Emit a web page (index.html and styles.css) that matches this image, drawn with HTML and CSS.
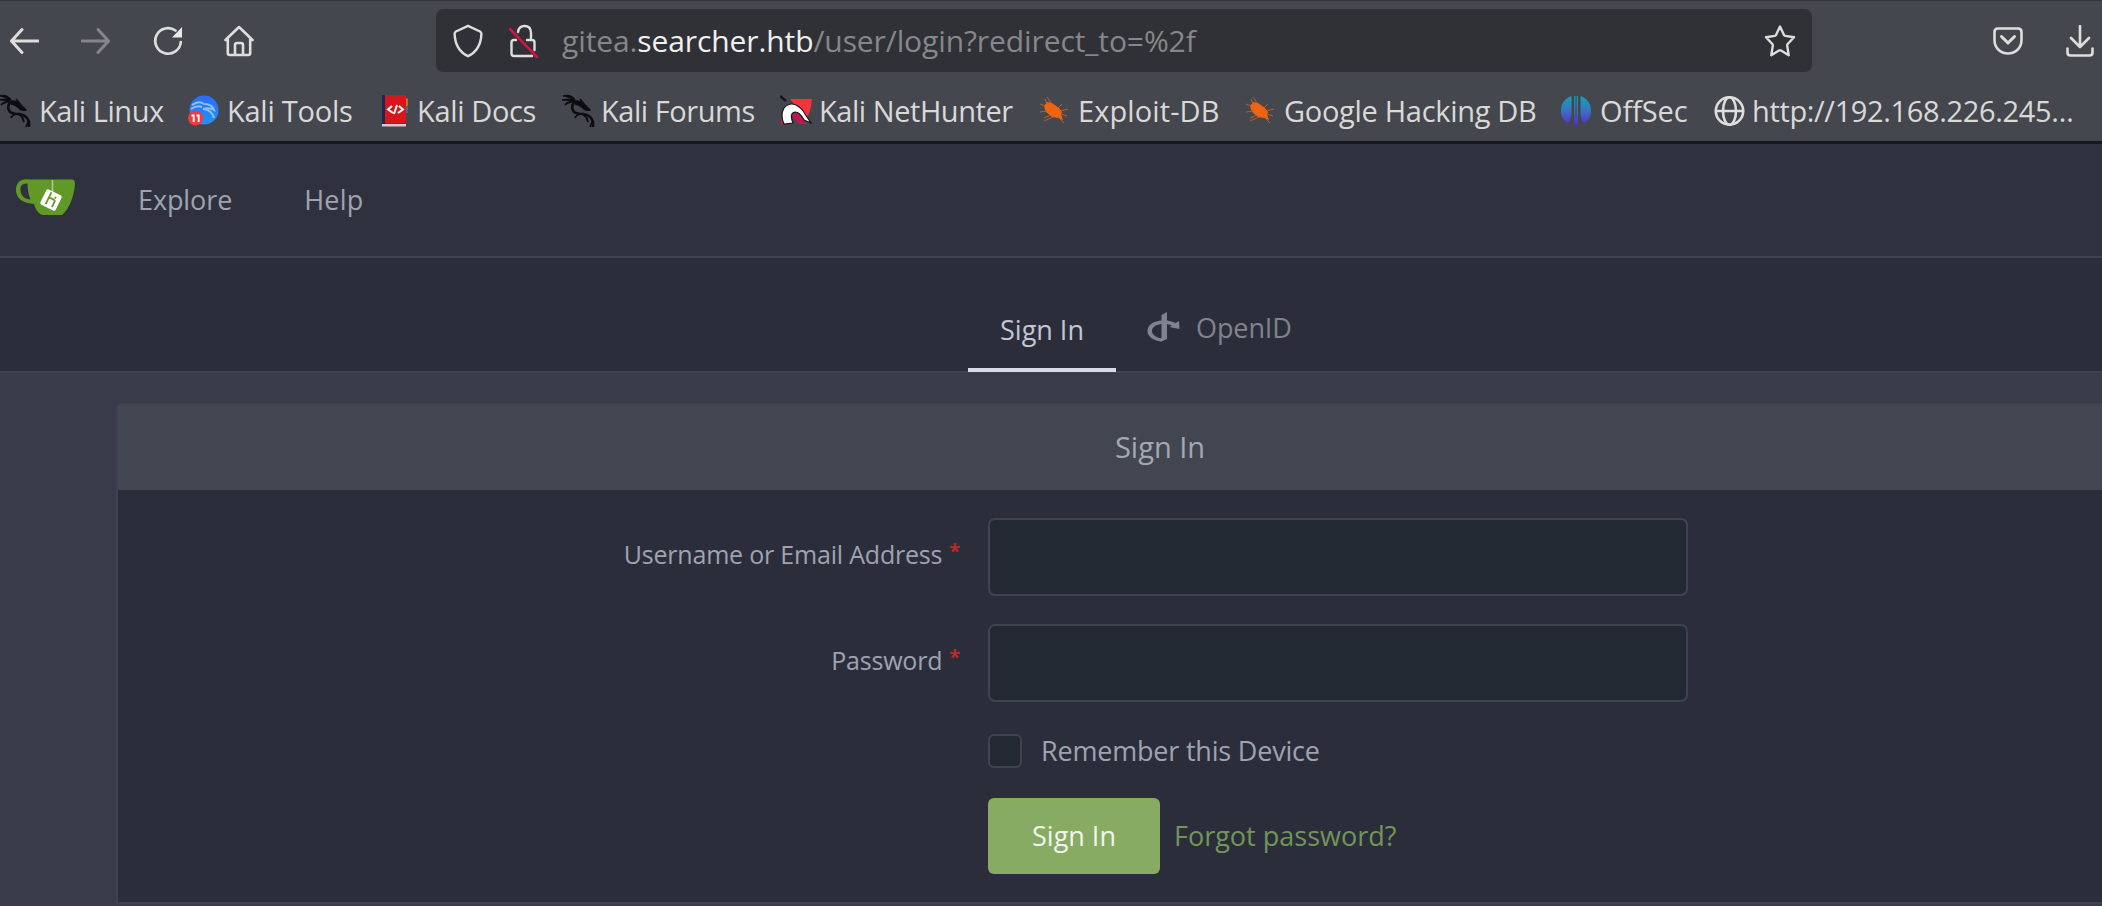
FILE: index.html
```
<!DOCTYPE html>
<html lang="en">
<head>
<meta charset="utf-8">
<title>Sign In - Gitea</title>
<link rel="stylesheet" href="styles.css">
</head>
<body>
<svg width="0" height="0" class="defs">
  <defs>
    <linearGradient id="offsec" x1="0" y1="0" x2="0" y2="1"><stop offset="0" stop-color="#12a5b5"/><stop offset=".5" stop-color="#3b6fc4"/><stop offset="1" stop-color="#5a1fd0"/></linearGradient>
    <linearGradient id="tools" x1="0" y1="0" x2="0" y2="1"><stop offset="0" stop-color="#2b6cf5"/><stop offset="1" stop-color="#1f93f8"/></linearGradient>
    <symbol id="dragon" viewBox="0 0 33 34">
      <path d="M1 2q8-2 12 4M0 6l10-1 3 3M3 11q3-4 8-3M18 5l5 6M13 7q7 0 10 4l5 5q-5 1-8-3-4-3-7-3" fill="#0c0d10" stroke="#0c0d10" stroke-width="1.600" stroke-linejoin="round"/>
      <path d="M13 7q-5 6-1 11 3 2 9 2 8 1 10 8v5" fill="none" stroke="#0c0d10" stroke-width="2.600"/>
      <path d="M21 20q4 3 5 8M18 20q-4 1-5 4M31 26l-3 7" fill="none" stroke="#0c0d10" stroke-width="1.800"/>
    </symbol>
    <symbol id="bug" viewBox="0 0 32 32">
      <path d="M6 11l3-4 5 1 7 5 3 4-1 2 2 6-5-2-6-1-6-5z" fill="#f0640f"/>
      <path d="M9 9L7 4M13 8L9 2M20 13l4-4M22 16l8-2M23 19l6 2M20 22l6 6M13 20l-7 3M15 22l-9 4M9 16l-7 1M7 11L2 9" fill="none" stroke="#b3602f" stroke-width="1"/>
    </symbol>
  </defs>
</svg>

<header class="browser">
  <div class="toolbar">
    <div class="buttons">
      <svg width="30" height="28" viewBox="0 0 30 28" class="ico"><path d="M29 14H3M13 2.500L2.500 14 13 25.500" stroke-width="3"/></svg>
      <svg width="30" height="28" viewBox="0 0 30 28" class="ico dim"><path d="M1 14h26M17 2.500L27.500 14 17 25.500" stroke-width="3"/></svg>
      <svg width="30" height="30" viewBox="0 0 30 30" class="ico"><path d="M22.500 4.500A12.800 12.800 0 1 0 27.800 16" stroke-width="2.700"/><path d="M29 1v10.500H19z" fill="#e9e9e7" stroke="none"/></svg>
      <svg width="30" height="32" viewBox="0 0 30 32" class="ico"><path d="M1.500 15L15 2l13.500 13M3.800 13v15q0 2 2 2h18.400q2 0 2-2V13M11 30V20q0-2 2-2h4q2 0 2 2v10" stroke-width="2.600"/></svg>
    </div>
    <div class="urlbar">
      <svg width="30" height="34" viewBox="0 0 30 34" class="ico shield"><path d="M15 1.800L27 7.500q1.500.7 1.400 2.400C28 20 24 28 15 32.200 6 28 2 20 1.600 9.900Q1.500 8.200 3 7.500z" stroke-width="2.400"/></svg>
      <svg width="30" height="34" viewBox="0 0 30 34" class="ico"><path d="M9 8q1-6 6.500-6Q22 2 22 9v7M7 16H5q-2.500 0-2.500 2.500v11Q2.500 32 5 32h18M18 16h5q2.500 0 2.500 2.500V26" stroke-width="2.400"/><path d="M1 5l27 28" stroke="#d3123e" stroke-width="2.600"/></svg>
      <div class="url">gitea.<b>searcher.htb</b>/user/login?redirect_to=%2f</div>
      <svg width="32" height="34" viewBox="0 0 32 34" class="ico star"><path d="M16 2.500l4 8.500q.4.800 1.300.9l8.700 1.300-6.300 6.800q-.6.700-.5 1.500l1.500 9.700-7.700-4.700q-1-.6-2 0L7.300 31.200l1.500-9.700q.1-.8-.5-1.500L2 13.200l8.700-1.300q.9-.1 1.300-.9z" stroke-width="2.400"/></svg>
    </div>
    <svg width="30" height="28" viewBox="0 0 30 28" class="ico pocket"><path d="M5 1.500h20q3.500 0 3.500 3.500v8c0 8-6 13.500-13.500 13.500S1.500 21 1.500 13V5Q1.500 1.500 5 1.500z" stroke-width="2.600"/><path d="M8.500 9.500l6.500 6.500 6.500-6.500" stroke-width="3"/></svg>
    <svg width="28" height="32" viewBox="0 0 28 32" class="ico download"><path d="M14 1v21M5 13l9 9 9-9M1.500 23.500v4q0 3 3 3h19q3 0 3-3v-4" stroke-width="2.600"/></svg>
  </div>
  <nav class="bookmarks">
    <a class="bm b1"><svg width="33" height="34"><use href="#dragon"/></svg><span>Kali Linux</span></a>
    <a class="bm b2"><svg width="32" height="32" viewBox="0 0 32 32"><circle cx="16" cy="15" r="14.500" fill="url(#tools)"/><path d="M4 10q7-5 12-1 8 0 10 6-5-3-11-1 9 1 11 9M3 14q6-4 11-2" fill="none" stroke="#8fc0fb" stroke-width="2"/><circle cx="7.500" cy="23" r="7.500" fill="#ee3b3f"/><path d="M3.500 20.500h2.200V27M8.500 20.500h2.200V27" fill="none" stroke="#fff" stroke-width="1.800"/></svg><span>Kali Tools</span></a>
    <a class="bm b3"><svg width="26" height="32" viewBox="0 0 26 32"><path d="M24 3v8h1.800V4z" fill="#d8791f"/><path d="M24 11h1.800v7H24z" fill="#2c7a8c"/><path d="M0 0h3.500v31H0z" fill="#1c2758"/><path d="M3 0h21v28H3z" fill="#d6161b"/><path d="M0 29h24v2.500H0z" fill="#d9c9cd"/><path d="M10 11l-4 3.500 5 3.500M17 11l4 3.500-5 3.500M15 10l-3 9" fill="none" stroke="#fff" stroke-width="2"/></svg><span>Kali Docs</span></a>
    <a class="bm b4"><svg width="33" height="34"><use href="#dragon"/></svg><span>Kali Forums</span></a>
    <a class="bm b5"><svg width="33" height="32" viewBox="0 0 33 32"><path d="M10 4h22q-1 13-6 20L15 10z" fill="#f8323a"/><path d="M0 1l6 5" stroke="#17181b" stroke-width="2.500"/><path d="M1 21l5 8-5 1zM11 20q5-6 10 2l6 7h-8z" fill="#c5164a"/><path d="M4 29Q0 20 4 13q5-6 12-3 6 3 9 9l6 9-7-3q-4-8-9-8-6 1-2 11z" fill="#fff" stroke="#17181b" stroke-width="1.200"/></svg><span>Kali NetHunter</span></a>
    <a class="bm b6"><svg width="32" height="32"><use href="#bug"/></svg><span>Exploit-DB</span></a>
    <a class="bm b7"><svg width="32" height="32"><use href="#bug"/></svg><span>Google Hacking DB</span></a>
    <a class="bm b8"><svg width="30" height="32" viewBox="0 0 30 32"><path d="M10.500 1C4 3 0 9 0 15.500S3 26 7 28q3-3 3.500-8zM19.500 1C26 3 30 9 30 15.500S27 26 23 28q-3-3-3.500-8zM13.200 1h1.300v22l1 1 .2-23h1.300v29l-2 2-1.800-2z" fill="url(#offsec)"/></svg><span>OffSec</span></a>
    <a class="bm b9"><svg width="32" height="32" viewBox="0 0 32 32" class="ico"><circle cx="15.500" cy="16" r="13.700" stroke-width="2.600"/><ellipse cx="15.500" cy="16" rx="6.500" ry="13.700" stroke-width="2.600"/><path d="M2 16h27" stroke-width="2.600"/></svg><span>http://192.168.226.245…</span></a>
  </nav>
</header>

<nav class="topnav">
  <svg width="62" height="40" viewBox="0 0 62 40" class="logo">
    <path d="M15 1.500C5 0 1 5 1 12c0 9 7 13 18 14 2 7 6 11 9 11h19c7-6 12-18 13-31 0-3-1-5-4-4.500z" fill="#609926"/>
    <path d="M12.500 5.500C7 5 5 8 5.500 12.500 6 18 10 21 15.500 21.500 13.500 17 12.500 11 12.500 5.500z" fill="#2f323e"/>
    <path d="M37.500 2v13" stroke="#b5c9a3" stroke-width="1.500"/>
    <g transform="rotate(26 36 22)"><rect x="27.500" y="13.500" width="17" height="17" rx="2" fill="#fff"/><path d="M33 15v13M33 20.500h5q2 0 2 2v5.500M39 17v2" fill="none" stroke="#609926" stroke-width="1.800"/></g>
  </svg>
  <a class="explore">Explore</a>
  <a class="help">Help</a>
</nav>

<nav class="tabs">
  <a class="tab active">Sign In</a>
  <a class="tab openid"><svg width="34" height="32" viewBox="0 0 34 32"><path d="M14.500 4l5.500-3v27l-5.500 2.500z" fill="#80838f"/><path d="M15 9.500C7 10 .5 13.500.5 20 .5 26 7 30 15 30.500v-3.200C9 26.500 5 24 5 20c0-4 4-6.500 10-7.300zM20 9.500q5 .5 8.500 2.500l3.500-2 .5 8-10-2 2.500-1.500q-2-1-5-1.500z" fill="#80838f"/></svg>OpenID</a>
</nav>

<main class="page">
  <section class="card">
    <h4 class="card-title">Sign In</h4>
    <form class="form">
      <label class="label">Username or Email Address<i>*</i></label><div class="input"></div>
      <label class="label">Password<i>*</i></label><div class="input"></div>
      <div class="remember"><span class="box"></span>Remember this Device</div>
      <div class="actions"><a class="submit">Sign In</a><a class="forgot">Forgot password?</a></div>
    </form>
  </section>
</main>
</body>
</html>
```
FILE: styles.css
```
* { box-sizing: border-box; }
body {
  margin: 0;
  width: 2102px;
  height: 906px;
  overflow: hidden;
  background: #393b4a;
  font: 27px/38px "Open Sans", "Noto Sans", sans-serif;
  color: #9fa3b1;
}
.defs { position: absolute; }
svg { display: block; flex: none; }
.ico { fill: none; stroke: #dededc; stroke-linecap: round; stroke-linejoin: round; }
.ico.dim { stroke: #85868b; }

.browser {
  height: 144px;
  background: #45474e;
  border-top: 1px solid #35373d;
  border-bottom: 3px solid #17181e;
}
.toolbar {
  display: flex;
  align-items: center;
  height: 79px;
}
.buttons {
  display: grid;
  grid-template-columns: 72px 72px 71px 30px;
  align-items: center;
  width: 427px;
  padding-left: 9px;
}
.urlbar {
  display: flex;
  align-items: center;
  width: 1376px;
  height: 63px;
  margin-left: 9px;
  padding: 0 16px 0 17px;
  border-radius: 7px;
  background: #303136;
}
.shield { margin-right: 26px; }
.url {
  flex: 1;
  padding-left: 23px;
  white-space: nowrap;
  font-size: 30px;
  line-height: 63px;
  letter-spacing: -0.1px;
  color: #86878a;
}
.url b { font-weight: 500; color: #f0f0ee; }
.pocket { margin-left: 181px; }
.download { margin-left: 43px; }

.bookmarks {
  display: grid;
  grid-template-columns: 188px 194px 180px 218px 258px 206px 317px 153px 388px;
  height: 61px;
}
.bm {
  display: flex;
  align-items: center;
  gap: 8px;
  height: 61px;
  padding-top: 1px;
  font-size: 29px;
  letter-spacing: -0.45px;
  color: #d9d9d8;
  white-space: nowrap;
}
.b1 svg { margin-left: -2px; }
.b2 { gap: 7px; letter-spacing: -0.25px; }
.b3 { gap: 9px; letter-spacing: -0.35px; }
.b4, .b5 { gap: 6px; }
.b6 { letter-spacing: 0.1px; }
.b7 { letter-spacing: -0.3px; }
.b8 { gap: 9px; letter-spacing: -0.1px; }
.b9 { gap: 6px; letter-spacing: -0.35px; }

.topnav {
  display: flex;
  align-items: center;
  height: 114px;
  padding-left: 15px;
  background: #2f323e;
  border-bottom: 2px solid #40434f;
}
.logo { margin-bottom: 4px; }
.explore { margin-left: 61px; letter-spacing: -0.1px; }
.help { margin-left: 72px; letter-spacing: 0.2px; }

.tabs {
  display: flex;
  height: 115px;
  padding-left: 968px;
  background: #2b2e3a;
  border-bottom: 2px solid #40434f;
}
.tab { display: flex; align-items: center; color: #80838f; }
.active {
  justify-content: center;
  width: 148px;
  height: 114px;
  padding-top: 33px;
  border-bottom: 4px solid #d8dce8;
  color: #c3c6d2;
}
.openid { gap: 15px; margin-left: 31px; padding-top: 26px; letter-spacing: -0.1px; }
.openid svg { margin-bottom: 1px; }

.page { padding: 30px 0 0 116px; }
.card {
  width: 2088px;
  height: 501px;
  border: 2px solid #40434f;
  border-radius: 6px 6px 0 0;
  background: #2b2e3a;
}
.card-title {
  margin: 0;
  height: 85px;
  background: #414651;
  font-size: 29px;
  font-weight: 400;
  line-height: 84px;
  text-align: center;
  color: #a4a8b5;
}
.form {
  display: grid;
  grid-template-columns: 842px 700px;
  column-gap: 28px;
  padding-top: 28px;
}
.label {
  display: flex;
  justify-content: flex-end;
  gap: 7px;
  padding-top: 17px;
  font-size: 25px;
  letter-spacing: -0.2px;
}
.label i {
  font-style: normal;
  font-size: 20px;
  font-weight: 700;
  line-height: 32px;
  color: #b92a2e;
}
.input {
  height: 78px;
  margin-bottom: 28px;
  border: 2px solid #40434f;
  border-radius: 7px;
  background: #232932;
}
.remember, .actions { grid-column: 2; display: flex; align-items: center; }
.remember {
  height: 34px;
  margin-top: 4px;
  letter-spacing: -0.2px;
}
.box {
  width: 34px;
  height: 34px;
  margin-right: 19px;
  border: 2px solid #40434f;
  border-radius: 6px;
  background: #232932;
}
.actions { margin-top: 30px; }
.submit {
  width: 172px;
  height: 76px;
  border-radius: 6px;
  background: #87ab63;
  line-height: 75px;
  text-align: center;
  color: #f2f5ee;
}
.forgot { margin-left: 14px; color: #729558; }
```
